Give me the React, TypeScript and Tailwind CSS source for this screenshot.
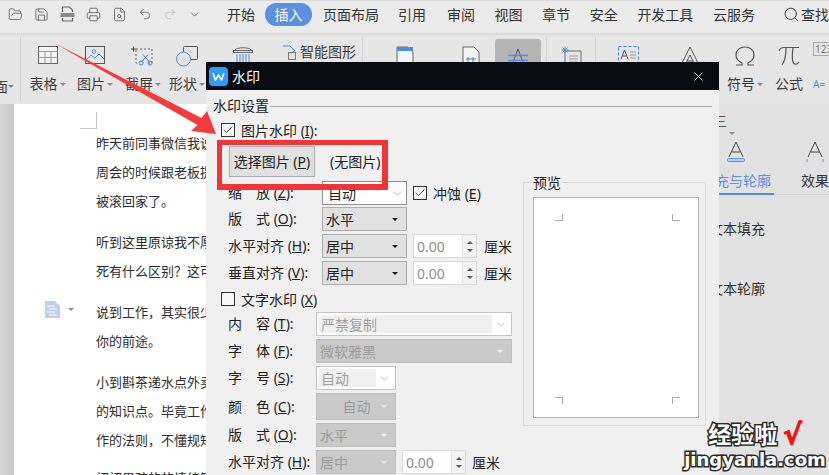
import { ReactNode } from 'react';
import { FolderOpen, Save, Printer, FileSearch, Undo2, Redo2, ChevronDown, Search, X, Check } from 'lucide-react';

const menus = ['审阅', '视图', '章节', '安全', '开发工具', '云服务'];

const docParagraphs = [
  ['昨天前同事微信我说我辞职了', '周会的时候跟老板提了离职', '被滚回家了。'],
  ['听到这里原谅我不厚道地笑了', '死有什么区别？这可是大忌'],
  ['说到工作，其实很少有人教你', '你的前途。'],
  ['小到斟茶递水点外卖，都是', '的知识点。毕竟工作不是上学', '作的法则，不懂规矩寸步难行'],
];

function Sep({ className = '' }: { className?: string }) {
  return <div className={`w-px h-[64px] bg-[#d2d2d2] shrink-0 ${className}`} />;
}

function Caret({ color = 'border-t-[#8a8a8a]' }: { color?: string }) {
  return <span className={`inline-block w-0 h-0 border-x-[3px] border-x-transparent border-t-[3px] ${color}`} />;
}

function RibbonItem({ width, icon, label, caret }: { width: string; icon: ReactNode; label?: string; caret?: boolean }) {
  return (
    <div className={`${width} shrink-0 flex flex-col items-center`}>
      <div className="h-[36px] pt-[11px] flex justify-center">{icon}</div>
      {label && (
        <div className="mt-[3px] flex items-center gap-[2px] text-[14px] leading-[20px] text-[#3c3c3c] whitespace-nowrap">
          {label}
          {caret && <Caret />}
        </div>
      )}
    </div>
  );
}

function TableIcon() {
  return (
    <svg width="20" height="18" viewBox="0 0 20 18" fill="none" stroke="#666" strokeWidth="1">
      <rect x="0.5" y="0.5" width="19" height="17" fill="#f4f4f4" />
      <path d="M0.5 5.5h19M0.5 11.5h19M7 5.5v12M13 5.5v12" stroke="#999" />
    </svg>
  );
}

function ImageIcon() {
  return (
    <svg width="20" height="18" viewBox="0 0 20 18" fill="none">
      <rect x="0.5" y="0.5" width="19" height="17" stroke="#555" />
      <circle cx="9" cy="5.5" r="1.8" stroke="#4a90e2" />
      <path d="M1 14l5-5 4 3 4-4 5 5" stroke="#4a90e2" />
    </svg>
  );
}

function CropIcon() {
  return (
    <svg width="24" height="20" viewBox="0 0 24 20" fill="none">
      <path d="M5 3h16v14H16" stroke="#666" strokeDasharray="2 2" />
      <path d="M5 4v13h3" stroke="#666" strokeDasharray="2 2" />
      <path d="M0 3h5M2.5 0.5v5" stroke="#444" />
      <circle cx="10" cy="17" r="2" stroke="#3b82d8" />
      <circle cx="19" cy="17" r="2" stroke="#3b82d8" />
      <path d="M11 15.5l6-7M18 15.5l-6-7" stroke="#3b82d8" />
    </svg>
  );
}

function ShapeIcon() {
  return (
    <svg width="22" height="21" viewBox="0 0 22 21" fill="none">
      <rect x="7.5" y="0.5" width="14" height="13" rx="1" stroke="#555" />
      <circle cx="7.5" cy="13" r="7" fill="#e3e3e3" stroke="#4a90e2" />
    </svg>
  );
}

function SmallWriteIcon() {
  return (
    <svg width="20" height="19" viewBox="0 0 20 19" fill="none">
      <rect x="0.5" y="4.5" width="19" height="2" stroke="#666" />
      <path d="M2 4c1-3 15-3 16 0" stroke="#666" />
      <path d="M4 8v9M7 8v9M10 8v9M13 8v9M16 8v9" stroke="#4a90e2" />
    </svg>
  );
}

function PageIcon({ mark }: { mark: string }) {
  return (
    <svg width="18" height="20" viewBox="0 0 18 20" fill="none">
      <path d="M1 1h11l5 5v14H1z" stroke="#666" fill="#f5f5f5" />
      <path d="M1 1h16v4H1z" fill="#4a90e2" opacity={mark === 'top' ? 1 : 0} />
      {mark === 'hash' && <path d="M6 11v8M11 11v8M4 13h10M4 17h10" stroke="#3b82d8" />}
    </svg>
  );
}

function StrikeAIcon() {
  return (
    <svg width="20" height="20" viewBox="0 0 20 20" fill="none">
      <path d="M4 18L10 2l6 16" stroke="#555" />
      <path d="M0 8.5h20M0 13.5h20" stroke="#4a90e2" strokeWidth="1.5" />
    </svg>
  );
}

function TocIcon() {
  return (
    <svg width="21" height="20" viewBox="0 0 21 20" fill="none">
      <path d="M4 5h16v14H4z" stroke="#666" />
      <path d="M8 10h9M8 13h9M8 16h9" stroke="#999" />
      <path d="M4 0.5v7M0.5 4h7M1.5 1.5l5 5M6.5 1.5l-5 5" stroke="#4a90e2" />
    </svg>
  );
}

function TextBoxIcon() {
  return (
    <svg width="21" height="18" viewBox="0 0 21 18" fill="none">
      <rect x="0.5" y="0.5" width="20" height="17" stroke="#3b82d8" strokeDasharray="3 2" />
      <path d="M3 13l3.5-9 3.5 9M4.5 10h4" stroke="#555" />
      <path d="M12 6h6M12 9h6M12 12h6" stroke="#999" />
    </svg>
  );
}

function ArtAIcon() {
  return (
    <svg width="20" height="20" viewBox="0 0 20 20" fill="none" stroke="#555">
      <path d="M1 19L10 1l9 18" />
      <path d="M5 19l5-10 5 10M7 15h6" />
    </svg>
  );
}

function OmegaIcon() {
  return (
    <svg width="20" height="20" viewBox="0 0 20 20" fill="none" stroke="#555" strokeWidth="1.2">
      <path d="M1 19h6v-2C3 15 1 12 1 9c0-5 4-8 9-8s9 3 9 8c0 3-2 6-6 8v2h6" />
    </svg>
  );
}

function PiIcon() {
  return (
    <svg width="22" height="20" viewBox="0 0 22 20" fill="none" stroke="#555" strokeWidth="1.2">
      <path d="M1 5c1-3 3-3.5 5-3.5h15" />
      <path d="M8 2c0 7-1 13-4 17M15 2c-1 7-1 11 0 14 1 3 4 3 6 0" />
    </svg>
  );
}

function PdfIcon() {
  return (
    <svg width="15" height="16" viewBox="0 0 15 16" fill="none" stroke="#666" strokeWidth="1.2">
      <path d="M2.500 6V1h7l3 3v2M2.500 12v3h10v-3" />
      <rect x="0.500" y="7" width="14" height="4" fill="#8c8c8c" stroke="none" />
    </svg>
  );
}

function DocLine({ text }: { text: string }) {
  return <div className="h-[29px] leading-[29px] whitespace-nowrap">{text}</div>;
}

function Label({ name, hot, width }: { name: string; hot: string; width: string }) {
  return (
    <div className={`${width} shrink-0 text-[14px] leading-[20px] text-[#222] whitespace-nowrap`}>
      {name} (<span className="underline">{hot}</span>):
    </div>
  );
}

function Checkbox({ checked }: { checked?: boolean }) {
  return (
    <span className="w-[14px] h-[14px] shrink-0 flex items-center justify-center border border-[#333] bg-[#f8f8f8]">
      {checked && <Check size={12} strokeWidth={1.5} color="#222" />}
    </span>
  );
}

function DarkCombo({ text, width = 'w-[85px]' }: { text: string; width?: string }) {
  return (
    <div className={`${width} h-[24px] shrink-0 flex items-center justify-between pl-[3px] pr-[8px] bg-[#e1e1e1] border border-[#adadad] text-[14px] text-[#222]`}>
      {text}
      <Caret color="border-t-[#111]" />
    </div>
  );
}

function GrayCombo({ text, width, height = 'h-[24px]', center }: { text: string; width: string; height?: string; center?: boolean }) {
  return (
    <div className={`${width} ${height} shrink-0 flex items-center pr-[8px] pl-[3px] bg-[#cacaca] border border-[#bdbdbd] text-[14px] text-[#9b9b9b]`}>
      <span className={center ? 'flex-1 text-center pl-[12px]' : 'flex-1'}>{text}</span>
      <Caret color="border-t-[#f0f0f0]" />
    </div>
  );
}

function WhiteCombo({ text, width }: { text: string; width: string }) {
  return (
    <div className={`${width} h-[24px] shrink-0 flex items-center bg-white border border-[#c4c4c4] p-[2px] text-[14px] text-[#a0a0a0]`}>
      <span className="flex-1 h-full flex items-center pl-[2px] bg-[#f0f0f0]">{text}</span>
      <ChevronDown size={13} strokeWidth={1} color="#888" className="mx-[2px]" />
    </div>
  );
}

function Spinner({ className = '' }: { className?: string }) {
  return (
    <div className={`w-[64px] h-[24px] shrink-0 flex items-center bg-white border border-[#d8d8d8] ${className}`}>
      <span className="flex-1 pl-[3px] text-[14px] text-[#8e8e8e]">0.00</span>
      <div className="w-[14px] h-full flex flex-col items-center justify-center gap-[5px] bg-[#f3f3f3] border-l border-[#e2e2e2]">
        <span className="w-0 h-0 border-x-[3px] border-x-transparent border-b-[3px] border-b-[#555]" />
        <Caret color="border-t-[#555]" />
      </div>
    </div>
  );
}

function Unit({ className = '' }: { className?: string }) {
  return <span className={`text-[14px] text-[#222] ${className}`}>厘米</span>;
}

function CropMark({ className }: { className: string }) {
  return <div className={`absolute w-[8px] h-[7px] border-[#aaa] ${className}`} />;
}

function WatermarkDialog() {
  return (
    <div className="absolute left-[206px] top-[62px] w-[513px] h-[413px] overflow-hidden bg-[#f0f0f0]">
      <div className="h-[28px] flex items-center bg-[#080b12] pl-[3px] pr-[13px]">
        <span className="w-[19px] h-[19px] rounded-[4px] bg-[#2f9bf5] flex items-center justify-center">
          <svg width="13" height="9" viewBox="0 0 13 9" fill="none" stroke="#fff" strokeWidth="1.6">
            <path d="M1 1l2.500 7 3-5 3 5L12 1" />
          </svg>
        </span>
        <span className="ml-[4px] flex-1 text-[14px] text-white">水印</span>
        <X size={15} strokeWidth={1.3} color="#fff" />
      </div>

      <div className="pt-[7px] pl-[7px] pr-[7px] h-[25px] flex items-center gap-[1px] text-[14px] leading-[18px] text-[#222]">
        水印设置
        <div className="flex-1 h-px bg-[#a8a8a8]" />
      </div>

      <div className="flex">
        <div className="w-[317px] shrink-0 flex flex-col">
          <div className="mt-[5px] h-[20px] pl-[15px] flex items-center gap-[6px] text-[14px] text-[#222]">
            <Checkbox checked />
            <span>
              图片水印 (<span className="underline">I</span>):
            </span>
          </div>
          <div className="mt-[6px] h-[31px] pl-[23px] flex items-center text-[14px] text-[#222]">
            <div className="w-[86px] h-[31px] flex items-center justify-center bg-[#e1e1e1] border border-[#adadad] whitespace-nowrap">
              选择图片 (<span className="underline">P</span>)
            </div>
            <span className="ml-[15px]">(无图片)</span>
          </div>

          <div className="mt-[4px] pl-[22px] flex items-center">
            <Label name="缩　放" hot="Z" width="w-[94px]" />
            <div className="w-[85px] h-[24px] flex items-center justify-between pl-[5px] pr-[2px] bg-white border border-[#8f8f8f] text-[14px] text-[#222]">
              自动
              <ChevronDown size={13} strokeWidth={1} color="#666" />
            </div>
            <span className="ml-[6px] flex items-center gap-[6px] text-[14px] text-[#222]">
              <Checkbox checked />
              <span>
                冲蚀 (<span className="underline">E</span>)
              </span>
            </span>
          </div>
          <div className="mt-[2px] pl-[22px] flex items-center">
            <Label name="版　式" hot="O" width="w-[94px]" />
            <DarkCombo text="水平" />
          </div>
          <div className="mt-[3px] pl-[22px] flex items-center">
            <Label name="水平对齐" hot="H" width="w-[94px]" />
            <DarkCombo text="居中" />
            <Spinner className="ml-[6px]" />
            <Unit className="ml-[7px]" />
          </div>
          <div className="mt-[3px] pl-[22px] flex items-center">
            <Label name="垂直对齐" hot="V" width="w-[94px]" />
            <DarkCombo text="居中" />
            <Spinner className="ml-[6px]" />
            <Unit className="ml-[7px]" />
          </div>

          <div className="mt-[4px] h-[20px] pl-[15px] flex items-center gap-[6px] text-[14px] text-[#222]">
            <Checkbox />
            <span>
              文字水印 (<span className="underline">X</span>)
            </span>
          </div>

          <div className="mt-[3px] pl-[22px] flex items-center">
            <Label name="内　容" hot="T" width="w-[88px]" />
            <WhiteCombo text="严禁复制" width="w-[196px]" />
          </div>
          <div className="mt-[3px] pl-[22px] flex items-center">
            <Label name="字　体" hot="F" width="w-[88px]" />
            <GrayCombo text="微软雅黑" width="w-[196px]" />
          </div>
          <div className="mt-[3px] pl-[22px] flex items-center">
            <Label name="字　号" hot="S" width="w-[88px]" />
            <WhiteCombo text="自动" width="w-[80px]" />
          </div>
          <div className="mt-[3px] pl-[22px] flex items-center">
            <Label name="颜　色" hot="C" width="w-[88px]" />
            <GrayCombo text="自动" width="w-[80px]" height="h-[27px]" center />
          </div>
          <div className="mt-[3px] pl-[22px] flex items-center">
            <Label name="版　式" hot="O" width="w-[88px]" />
            <GrayCombo text="水平" width="w-[80px]" />
          </div>
          <div className="mt-[3px] pl-[22px] flex items-center">
            <Label name="水平对齐" hot="H" width="w-[88px]" />
            <GrayCombo text="居中" width="w-[80px]" />
            <Spinner className="ml-[6px]" />
            <Unit className="ml-[6px]" />
          </div>
        </div>

        <div className="mt-[67px] w-[183px] h-[244px] relative border border-[#dcdcdc] pt-[14px] pl-[9px] pr-[6px] pb-[7px]">
          <span className="absolute left-[8px] -top-[10px] px-px bg-[#f0f0f0] text-[14px] leading-[20px] text-[#222]">预览</span>
          <div className="relative w-full h-full bg-white border border-[#b9b9b9]">
            <CropMark className="left-[21px] top-[16px] border-r border-b" />
            <CropMark className="right-[18px] top-[16px] border-l border-b" />
            <CropMark className="left-[21px] bottom-[13px] border-r border-t" />
            <CropMark className="right-[18px] bottom-[13px] border-l border-t" />
          </div>
        </div>
      </div>
    </div>
  );
}

export default function App() {
  return (
    <div className="relative w-[829px] h-[475px] overflow-hidden flex flex-col bg-[#e3e3e3] font-['Noto_Sans','Noto_Sans_CJK_SC',sans-serif]">
      {/* menu bar */}
      <div className="h-[33px] shrink-0 flex items-start bg-[#ebebeb] border-t border-[#dcdcdc] pl-[8px]">
        <div className="flex items-center h-[26px] gap-[11px] text-[#666]">
          <FolderOpen size={15} strokeWidth={1.4} />
          <Save size={15} strokeWidth={1.4} />
          <PdfIcon />
          <Printer size={15} strokeWidth={1.4} />
          <FileSearch size={15} strokeWidth={1.4} />
          <Undo2 size={14} strokeWidth={1.4} />
          <Redo2 size={14} strokeWidth={1.4} color="#bbb" />
          <ChevronDown size={13} strokeWidth={1.6} />
        </div>
        <div className="ml-[26px] h-[26px] flex items-center text-[14px] text-[#333] whitespace-nowrap">
          <span>开始</span>
          <span className="ml-[10px] h-[23px] w-[47px] flex items-center justify-center rounded-full bg-[#5b8fe0] text-white">插入</span>
          <span className="ml-[11px]">页面布局</span>
          <span className="ml-[19px]">引用</span>
          <div className="ml-[21px] flex gap-[19.6px]">
            {menus.map(m => (
              <span key={m}>{m}</span>
            ))}
          </div>
          <Search size={17} strokeWidth={1.3} className="ml-[28px]" />
          <span className="ml-[1px]">查找</span>
        </div>
      </div>

      {/* ribbon */}
      <div className="h-[71px] shrink-0 flex items-start bg-[#e6e6e6] border-t-2 border-[#dcdcdc] overflow-hidden">
        <div className="w-[20px] h-[64px] pt-[39px] flex items-center text-[14px] text-[#3c3c3c] -ml-[6px] pl-0 shrink-0">
          面
          <Caret />
        </div>
        <Sep className="ml-[6px] mt-[2px]" />
        <RibbonItem width="w-[53px]" icon={<TableIcon />} label="表格" caret />
        <RibbonItem width="w-[42px]" icon={<ImageIcon />} label="图片" caret />
        <RibbonItem width="w-[54px]" icon={<CropIcon />} label="截屏" caret />
        <RibbonItem width="w-[34px]" icon={<ShapeIcon />} label="形状" caret />
        <RibbonItem width="w-[78px]" icon={<SmallWriteIcon />} />
        <div className="w-[80px] shrink-0 pt-[7px] flex items-center gap-[4px] text-[14px] leading-[20px] text-[#3c3c3c] whitespace-nowrap">
          <svg width="14" height="15" viewBox="0 0 14 15" fill="none">
            <path d="M1 1h7l5 5-4 2" stroke="#4a90e2" />
            <rect x="6.500" y="7.500" width="7" height="7" stroke="#777" />
          </svg>
          智能图形
        </div>
        <Sep className="mt-[2px]" />
        <RibbonItem width="w-[83px]" icon={<PageIcon mark="top" />} />
        <RibbonItem width="w-[49px]" icon={<PageIcon mark="hash" />} />
        <div className="w-[46px] h-[40px] shrink-0 mt-[4px] rounded-[3px] bg-[#b5b5b5] flex justify-center pt-[8px]">
          <StrikeAIcon />
        </div>
        <Sep className="ml-[5px] mt-[2px]" />
        <RibbonItem width="w-[48px]" icon={<TocIcon />} />
        <Sep className="mt-[2px]" />
        <RibbonItem width="w-[64px]" icon={<TextBoxIcon />} />
        <RibbonItem width="w-[60px]" icon={<ArtAIcon />} />
        <RibbonItem width="w-[50px]" icon={<OmegaIcon />} label="符号" caret />
        <RibbonItem width="w-[38px]" icon={<PiIcon />} label="公式" />
        <div className="pl-[5px] pt-[7px] text-[10px] leading-[12px] text-[#777] flex flex-col gap-[22px]">
          <span className="border border-[#aaa] px-px">123</span>
          <span className="text-[#4a90e2]">A=</span>
        </div>
      </div>

      {/* document + side pane */}
      <div className="flex-1 min-h-0 flex">
        <div className="w-[14px] shrink-0 bg-gradient-to-r from-[#d8d8d8] to-[#c8c8c8]" />
        <div className="relative flex-1 min-w-0 bg-white text-[13px] text-[#2c2c2c] overflow-hidden pl-[82px]">
          <div className="-ml-[16px] mt-[8px] w-[17px] h-[17px] border-r border-b border-[#c4c4c4]" />
          <div className="flex flex-col gap-[12px]">
            {docParagraphs.map((lines, i) => (
              <div key={i}>
                {lines.map(l => (
                  <DocLine key={l} text={l} />
                ))}
              </div>
            ))}
            <div className="-mt-[3px]">
              <DocLine text="初初男孩的的情绪管理" />
            </div>
          </div>
          <div className="absolute left-[31px] top-[197px] flex items-center gap-[8px]">
            <svg width="15" height="17" viewBox="0 0 15 17">
              <path d="M0 0h10l5 5v12H0z" fill="#bcd0ee" />
              <path d="M2 5h8M4 8h8M2 11h8M4 14h8" stroke="#fff" />
            </svg>
            <Caret />
          </div>
        </div>

        <div className="w-[139px] shrink-0 flex flex-col bg-[#e2e2e2] text-[14px] text-[#333]">
          <div className="h-[37px] pt-[10px] pl-[23px] flex items-start gap-[2px] text-[#555]">
            <span className="leading-[14px]">三</span>
            <span className="mt-[5px]"><Caret /></span>
          </div>
          <div className="h-[54px] flex border-b border-[#d4d4d4]">
            <div className="w-[84px] ml-0 flex flex-col items-end text-[#5b8fe0] border-b-2 border-[#4f8be6] h-[54px]">
              <svg className="mr-[29px]" width="18" height="22" viewBox="0 0 18 22" fill="none" stroke="#444">
                <path d="M2 16L9 1l7 15M5 11h8" />
                <rect x="0.5" y="17.500" width="17" height="3" rx="1" stroke="#5b8fe0" fill="#bcd0ee" />
              </svg>
              <span className="mt-[7px] mr-[3px] whitespace-nowrap">填充与轮廓</span>
            </div>
            <div className="ml-[27px] flex flex-col items-center">
              <svg width="18" height="22" viewBox="0 0 18 22" fill="none" stroke="#444">
                <path d="M2 16L9 1l7 15M5 11h8" />
                <path d="M1 18v3M17 18v3" stroke="#5b8fe0" />
              </svg>
              <span className="mt-[7px] whitespace-nowrap">效果</span>
            </div>
          </div>
          <div className="mt-[23px] pl-[19px]">文本填充</div>
          <div className="mt-[39px] pl-[19px]">文本轮廓</div>
        </div>
      </div>

      <WatermarkDialog />

      {/* red annotations */}
      <svg className="absolute inset-0 pointer-events-none" width="829" height="475" viewBox="0 0 829 475">
        <polygon points="54,43 201.500,118 207,111 216,134 191,131 197.500,125" fill="#f43a3a" />
      </svg>
      <div className="absolute left-[217px] top-[140px] w-[171px] h-[50px] border-[6px] border-t-[5px] border-l-[5px] border-[#f43434] pointer-events-none" />

      {/* site stamp */}
      <div className="absolute left-[690px] top-[420px] w-[130px] flex flex-col items-center pointer-events-none font-['DejaVu_Sans','Noto_Sans_CJK_SC',sans-serif] font-bold text-white [paint-order:stroke_fill] [-webkit-text-stroke:3px_#2a2a2a]">
        <div className="flex items-center h-[30px] text-[23px] leading-[30px] whitespace-nowrap">
          经验啦
          <span className="ml-[6px] text-[28px] text-[#f01010] [-webkit-text-stroke:1px_#f01010]">√</span>
        </div>
        <div className="text-[18px] leading-[20px] whitespace-nowrap">jingyanla.com</div>
      </div>
    </div>
  );
}
